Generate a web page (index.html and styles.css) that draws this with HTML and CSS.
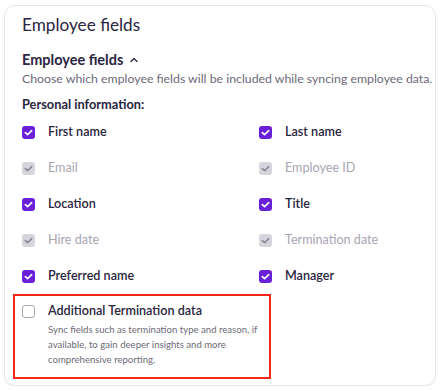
FILE: index.html
```html
<!DOCTYPE html>
<html>
<head>
<meta charset="utf-8">
<link rel="stylesheet" href="styles.css">
</head>
<body>
<div class="card">
  <h1 class="title">Employee fields</h1>
  <div class="section-head">
    <span>Employee fields</span>
    <svg class="chev" width="10" height="10" viewBox="0 0 10 10"><path d="M2 6.5 L5 3.5 L8 6.5" fill="none" stroke="#2a2540" stroke-width="1.3" stroke-linecap="round" stroke-linejoin="round"/></svg>
  </div>
  <p class="desc">Choose which employee fields will be included while syncing employee data.</p>
  <div class="group-label">Personal information:</div>
  <div class="grid">
    <div class="item"><span class="cb on"><svg viewBox="0 0 14 14"><path d="M3.6 7.2 L6 9.4 L10.4 4.9" fill="none" stroke="#fff" stroke-width="1.8" stroke-linecap="round" stroke-linejoin="round"/></svg></span><span class="lbl">First name</span></div>
    <div class="item"><span class="cb on"><svg viewBox="0 0 14 14"><path d="M3.6 7.2 L6 9.4 L10.4 4.9" fill="none" stroke="#fff" stroke-width="1.8" stroke-linecap="round" stroke-linejoin="round"/></svg></span><span class="lbl">Last name</span></div>
    <div class="item"><span class="cb dis"><svg viewBox="0 0 14 14"><path d="M3.6 7.2 L6 9.4 L10.4 4.9" fill="none" stroke="#8d8a96" stroke-width="1.8" stroke-linecap="round" stroke-linejoin="round"/></svg></span><span class="lbl muted">Email</span></div>
    <div class="item"><span class="cb dis"><svg viewBox="0 0 14 14"><path d="M3.6 7.2 L6 9.4 L10.4 4.9" fill="none" stroke="#8d8a96" stroke-width="1.8" stroke-linecap="round" stroke-linejoin="round"/></svg></span><span class="lbl muted">Employee ID</span></div>
    <div class="item"><span class="cb on"><svg viewBox="0 0 14 14"><path d="M3.6 7.2 L6 9.4 L10.4 4.9" fill="none" stroke="#fff" stroke-width="1.8" stroke-linecap="round" stroke-linejoin="round"/></svg></span><span class="lbl">Location</span></div>
    <div class="item"><span class="cb on"><svg viewBox="0 0 14 14"><path d="M3.6 7.2 L6 9.4 L10.4 4.9" fill="none" stroke="#fff" stroke-width="1.8" stroke-linecap="round" stroke-linejoin="round"/></svg></span><span class="lbl">Title</span></div>
    <div class="item"><span class="cb dis"><svg viewBox="0 0 14 14"><path d="M3.6 7.2 L6 9.4 L10.4 4.9" fill="none" stroke="#8d8a96" stroke-width="1.8" stroke-linecap="round" stroke-linejoin="round"/></svg></span><span class="lbl muted">Hire date</span></div>
    <div class="item"><span class="cb dis"><svg viewBox="0 0 14 14"><path d="M3.6 7.2 L6 9.4 L10.4 4.9" fill="none" stroke="#8d8a96" stroke-width="1.8" stroke-linecap="round" stroke-linejoin="round"/></svg></span><span class="lbl muted">Termination date</span></div>
    <div class="item"><span class="cb on"><svg viewBox="0 0 14 14"><path d="M3.6 7.2 L6 9.4 L10.4 4.9" fill="none" stroke="#fff" stroke-width="1.8" stroke-linecap="round" stroke-linejoin="round"/></svg></span><span class="lbl">Preferred name</span></div>
    <div class="item"><span class="cb on"><svg viewBox="0 0 14 14"><path d="M3.6 7.2 L6 9.4 L10.4 4.9" fill="none" stroke="#fff" stroke-width="1.8" stroke-linecap="round" stroke-linejoin="round"/></svg></span><span class="lbl">Manager</span></div>
  </div>
  <div class="extra">
    <span class="cb off"></span>
    <div class="extra-text">
      <div class="lbl">Additional Termination data</div>
      <p class="extra-desc">Sync fields such as termination type and reason, if available, to gain deeper insights and more comprehensive reporting.</p>
    </div>
  </div>
</div>
</body>
</html>
```

FILE: styles.css
```css
* { box-sizing: border-box; }
html, body { margin: 0; padding: 0; background: #fff; }
body {
  font-family: Lato, "Noto Sans", sans-serif;
  color: #2a2540;
  padding: 5px 8px 0 4px;
}
.card {
  width: 432px;
  height: 381px;
  border: 1.5px solid #e6e6e9;
  border-radius: 11px;
  box-shadow: 0 1px 1px rgba(0,0,0,0.06);
  padding: 8px 10px 0 17px;
}
.title {
  margin: 0;
  font-size: 17.2px;
  font-weight: 400;
  line-height: 22px;
}
.section-head {
  display: flex;
  align-items: center;
  gap: 6px;
  margin-top: 15px;
  font-size: 14.5px;
  font-weight: 700;
  line-height: 18px;
}
.chev { margin-top: -1px; }
.desc {
  margin: 1px 0 0;
  font-size: 12.3px;
  line-height: 17px;
  color: #6d6a78;
  white-space: nowrap;
}
.group-label {
  margin-top: 9px;
  font-size: 12.8px;
  font-weight: 700;
  line-height: 17px;
}
.grid {
  display: grid;
  grid-template-columns: 237px 1fr;
  grid-auto-rows: 36px;
  margin-top: 1px;
}
.item {
  display: flex;
  align-items: center;
  gap: 13px;
}
.cb {
  width: 13px;
  height: 13px;
  border-radius: 3px;
  flex: none;
  display: flex;
}
.cb svg { width: 13px; height: 13px; }
.cb.on { background: #6a1fd8; }
.cb.dis { background: #d6d4dc; }
.cb.off { border: 1px solid #a9a6b3; background: #fff; }
.lbl {
  font-size: 12.6px;
  font-weight: 600;
  line-height: 16px;
}
.lbl.muted { color: #a8a5b2; font-weight: 400; }
.extra {
  display: flex;
  gap: 13px;
  width: 258px;
  margin-left: -9px;
  margin-top: 0;
  border: 2px solid #f5281b;
  padding: 7px 3px 10px 7px;
}
.extra .cb { margin-top: 2px; }
.extra-desc {
  margin: 3px 0 0;
  font-size: 9.6px;
  line-height: 15px;
  color: #6d6a78;
}
```
